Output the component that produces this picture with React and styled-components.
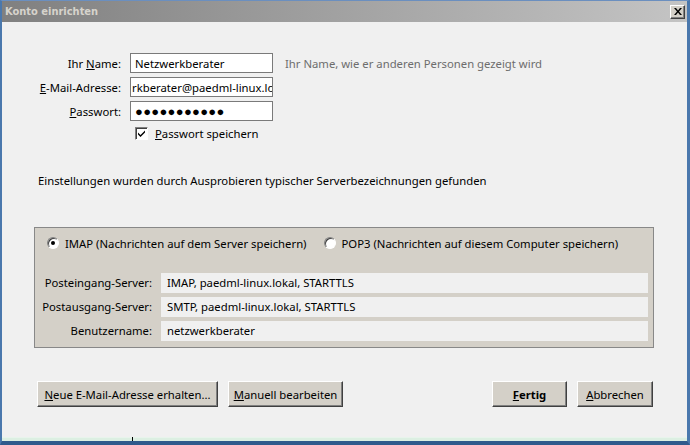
import React from 'react';
import styled, { createGlobalStyle } from 'styled-components';

const GlobalStyle = createGlobalStyle`
  html, body {
    margin: 0;
    padding: 0;
    background: #f0f0f0;
  }
  * {
    box-sizing: border-box;
  }
`;

function App() {
  return (
    <>
      <GlobalStyle />
      <Window>
        <TitleBar>
          <Title>Konto einrichten</Title>
          <CloseButton>
            <svg width="8" height="7" viewBox="0 0 8 7">
              <path d="M0 0h2l2 2.5L6 0h2L5 3.5 8 7H6L4 4.5 2 7H0l3-3.5z" fill="#000" />
            </svg>
          </CloseButton>
        </TitleBar>
        <Body>
          <Form>
            <Label>Ihr <u>N</u>ame:</Label>
            <TextBox>Netzwerkberater</TextBox>
            <Hint>Ihr Name, wie er anderen Personen gezeigt wird</Hint>

            <Label><u>E</u>-Mail-Adresse:</Label>
            <TextBox $clip>rkberater@paedml-linux.lo</TextBox>
            <span />

            <Label><u>P</u>asswort:</Label>
            <TextBox $password>●●●●●●●●●●●</TextBox>
            <span />

            <span />
            <CheckRow>
              <CheckBox>
                <svg width="7" height="7" viewBox="0 0 7 7">
                  <path d="M0 2.5l2.5 2.5L7 0.5V2.5L2.5 7 0 4.5z" fill="#000" />
                </svg>
              </CheckBox>
              <span><u>P</u>asswort speichern</span>
            </CheckRow>
          </Form>

          <Message>Einstellungen wurden durch Ausprobieren typischer Serverbezeichnungen gefunden</Message>

          <Group>
            <RadioRow>
              <RadioOption>
                <Radio $checked />
                IMAP (Nachrichten auf dem Server speichern)
              </RadioOption>
              <RadioOption>
                <Radio />
                POP3 (Nachrichten auf diesem Computer speichern)
              </RadioOption>
            </RadioRow>
            <ServerList>
              <ServerLabel>Posteingang-Server:</ServerLabel>
              <ServerValue>IMAP, paedml-linux.lokal, STARTTLS</ServerValue>
              <ServerLabel>Postausgang-Server:</ServerLabel>
              <ServerValue>SMTP, paedml-linux.lokal, STARTTLS</ServerValue>
              <ServerLabel>Benutzername:</ServerLabel>
              <ServerValue>netzwerkberater</ServerValue>
            </ServerList>
          </Group>

          <ButtonBar>
            <ButtonGroup>
              <Button $width={181}><u>N</u>eue E-Mail-Adresse erhalten...</Button>
              <Button $width={115}><u>M</u>anuell bearbeiten</Button>
            </ButtonGroup>
            <ButtonGroup>
              <Button $width={75} $bold><u>F</u>ertig</Button>
              <Button $width={76}><u>A</u>bbrechen</Button>
            </ButtonGroup>
          </ButtonBar>
        </Body>
        <StatusStrip>
          <Tick />
        </StatusStrip>
      </Window>
    </>
  );
}

const Window = styled.div`
  width: 690px;
  height: 445px;
  display: flex;
  flex-direction: column;
  background: #f0f0f0;
  border-top: 1px solid #6b8fbf;
  border-left: 2px solid #4a78ad;
  border-right: 3px solid #4a78ad;
  border-bottom: 4px solid #2f5a8c;
  font-family: "Noto Sans", "Open Sans", sans-serif;
  font-size: 11.3px;
  color: #000;
  overflow: hidden;
`;

const TitleBar = styled.div`
  height: 21px;
  flex: none;
  display: flex;
  align-items: center;
  justify-content: space-between;
  padding: 0 2px 0 3px;
  background: linear-gradient(to right, #808080, #c4c4c4);
`;

const Title = styled.div`
  font-family: "DejaVu Sans Condensed", "DejaVu Sans", sans-serif;
  font-weight: bold;
  font-size: 11px;
  color: #d6d3cc;
`;

const CloseButton = styled.div`
  width: 15px;
  height: 14px;
  display: flex;
  align-items: center;
  justify-content: center;
  background: #d4d0c8;
  border: 1px solid;
  border-color: #fff #404040 #404040 #fff;
  box-shadow: inset -1px -1px 0 #808080;
`;

const Body = styled.div`
  flex: 1;
  display: flex;
  flex-direction: column;
  padding-top: 31px;
`;

const Form = styled.div`
  display: grid;
  grid-template-columns: 119px 143px auto;
  column-gap: 9px;
  row-gap: 4px;
  align-items: center;
`;

const Label = styled.div`
  text-align: right;
  white-space: nowrap;
`;

const TextBox = styled.div`
  height: 20px;
  display: flex;
  align-items: center;
  background: #fff;
  border: 1px solid #7a7a7a;
  white-space: nowrap;
  overflow: hidden;
  padding-left: ${(p) => (p.$clip ? '1px' : '4px')};
  font-size: ${(p) => (p.$password ? '13px' : '11.3px')};
  letter-spacing: ${(p) => (p.$password ? '0.3px' : '0')};
`;

const Hint = styled.div`
  margin-left: 3px;
  color: #6d6d6d;
  white-space: nowrap;
`;

const CheckRow = styled.label`
  display: flex;
  align-items: center;
  gap: 7px;
  margin: 1px 0 0 5px;
`;

const CheckBox = styled.span`
  width: 13px;
  height: 13px;
  display: flex;
  align-items: center;
  justify-content: center;
  background: #fff;
  border: 1px solid;
  border-color: #808080 #fff #fff #808080;
  box-shadow: inset 1px 1px 0 #404040;
`;

const Message = styled.div`
  margin: 32px 0 0 36px;
  white-space: nowrap;
`;

const Group = styled.div`
  margin: 39px 0 0 32px;
  width: 620px;
  height: 121px;
  background: #d4d0c8;
  border: 1px solid #888;
  padding: 7px 5px 0 12px;
`;

const RadioRow = styled.div`
  display: flex;
  gap: 17px;
  height: 16px;
  align-items: center;
`;

const RadioOption = styled.div`
  display: flex;
  align-items: center;
  gap: 6px;
  white-space: nowrap;
`;

const Radio = styled.span`
  width: 12px;
  height: 12px;
  border-radius: 50%;
  background: #fff;
  border: 1px solid;
  border-color: #808080 #fff #fff #808080;
  box-shadow: inset 1px 1px 0 #404040;
  display: flex;
  align-items: center;
  justify-content: center;

  &::after {
    content: '';
    width: 4px;
    height: 4px;
    border-radius: 50%;
    background: ${(p) => (p.$checked ? '#000' : 'transparent')};
  }
`;

const ServerList = styled.div`
  margin: 22px 0 0 -11px;
  display: grid;
  grid-template-columns: 116px 1fr;
  column-gap: 9px;
  row-gap: 4px;
`;

const ServerLabel = styled.div`
  text-align: right;
  white-space: nowrap;
  line-height: 20px;
`;

const ServerValue = styled.div`
  height: 20px;
  line-height: 20px;
  padding-left: 6px;
  background: #f0f0f0;
  white-space: nowrap;
`;

const ButtonBar = styled.div`
  margin: 33px 0 0 35px;
  width: 616px;
  display: flex;
  justify-content: space-between;
`;

const ButtonGroup = styled.div`
  display: flex;
  gap: 10px;
`;

const Button = styled.div`
  width: ${(p) => p.$width}px;
  height: 26px;
  display: flex;
  align-items: center;
  justify-content: center;
  background: #d4d0c8;
  border: 1px solid;
  border-color: #fff #404040 #404040 #fff;
  box-shadow: inset -1px -1px 0 #808080;
  font-weight: ${(p) => (p.$bold ? 'bold' : 'normal')};
  white-space: nowrap;
`;

const StatusStrip = styled.div`
  height: 4px;
  flex: none;
  background: #dcefe2;
  border-top: 1px solid #e8f4ec;
  position: relative;
`;

const Tick = styled.span`
  position: absolute;
  left: 130px;
  top: -1px;
  width: 1px;
  height: 4px;
  background: #000;
`;

export default App;
